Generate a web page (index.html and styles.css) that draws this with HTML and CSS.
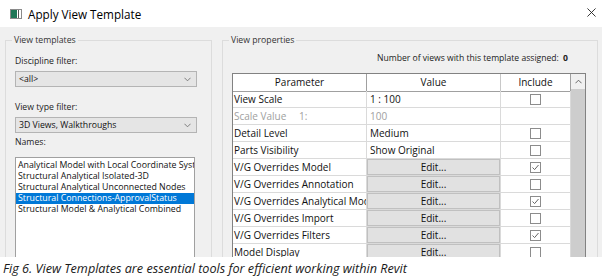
FILE: index.html
```html
<!DOCTYPE html>
<html>
  <head>
    <meta charset='utf-8' />
    <title>Apply View Template</title>
    <link rel="stylesheet" href="styles.css">
  </head>
  <body>
    <div class='dialog'>
      <div class='titlebar'>
        <svg class='app-icon' viewBox='0 0 12 10'>
          <rect x='0.5' y='0.5' width='11' height='9' fill='#fff' stroke='#8a8a8a' />
          <rect x='1' y='1' width='6' height='8' fill='#1f7656' />
          <rect x='8' y='1' width='1' height='8' fill='#555' />
        </svg>
        <span class='title'>Apply View Template</span>
        <svg class='close' viewBox='0 0 10 10'>
          <path d='M0.5 0.5 L9.5 9.5 M9.5 0.5 L0.5 9.5' stroke='#222' stroke-width='1' fill='none' />
        </svg>
      </div>
      <div class='panes'>
        <fieldset class='group templates'>
          <legend>View templates</legend>
          <div class='stack'>
            <div class='label'>Discipline filter:</div>
            <div class='select first'>
              <span>&lt;all&gt;</span>
              <svg class='chev' viewBox='0 0 8 5'><path d='M0.5 0.5 L4 4 L7.5 0.5' stroke='#707070' fill='none' /></svg>
            </div>
            <div class='label gap'>View type filter:</div>
            <div class='select first'>
              <span>3D Views, Walkthroughs</span>
              <svg class='chev' viewBox='0 0 8 5'><path d='M0.5 0.5 L4 4 L7.5 0.5' stroke='#707070' fill='none' /></svg>
            </div>
            <div class='label names-label'>Names:</div>
            <ul class='names'>
              <li>Analytical Model with Local Coordinate System</li>
              <li>Structural Analytical Isolated-3D</li>
              <li>Structural Analytical Unconnected Nodes</li>
              <li class='selected'>Structural Connections-ApprovalStatus</li>
              <li>Structural Model &amp; Analytical Combined</li>
            </ul>
          </div>
        </fieldset>
        <fieldset class='group properties'>
          <legend>View properties</legend>
          <div class='count'>Number of views with this template assigned: <b>0</b></div>
          <div class='gridbox'>
            <div class='grid'>
              <div class='head'>Parameter</div>
              <div class='head'>Value</div>
              <div class='head'>Include</div>

              <div class='cell'>View Scale</div>
              <div class='cell val'>1 : 100</div>
              <div class='cell inc'><span class='check'></span></div>

              <div class='cell dim'>Scale Value <span class='unit'>1:</span></div>
              <div class='cell val dim'>100</div>
              <div class='cell inc'></div>

              <div class='cell'>Detail Level</div>
              <div class='cell val'>Medium</div>
              <div class='cell inc'><span class='check'></span></div>

              <div class='cell'>Parts Visibility</div>
              <div class='cell val'>Show Original</div>
              <div class='cell inc'><span class='check'></span></div>

              <div class='cell'>V/G Overrides Model</div>
              <div class='cell btn'><span class='edit'>Edit...</span></div>
              <div class='cell inc'><span class='check on'><svg viewBox='0 0 9 9'><path d='M1.5 4.5 L3.6 6.6 L7.5 2' /></svg></span></div>

              <div class='cell'>V/G Overrides Annotation</div>
              <div class='cell btn'><span class='edit'>Edit...</span></div>
              <div class='cell inc'><span class='check'></span></div>

              <div class='cell'>V/G Overrides Analytical Model</div>
              <div class='cell btn'><span class='edit'>Edit...</span></div>
              <div class='cell inc'><span class='check on'><svg viewBox='0 0 9 9'><path d='M1.5 4.5 L3.6 6.6 L7.5 2' /></svg></span></div>

              <div class='cell'>V/G Overrides Import</div>
              <div class='cell btn'><span class='edit'>Edit...</span></div>
              <div class='cell inc'><span class='check'></span></div>

              <div class='cell'>V/G Overrides Filters</div>
              <div class='cell btn'><span class='edit'>Edit...</span></div>
              <div class='cell inc'><span class='check on'><svg viewBox='0 0 9 9'><path d='M1.5 4.5 L3.6 6.6 L7.5 2' /></svg></span></div>

              <div class='cell'>Model Display</div>
              <div class='cell btn'><span class='edit'>Edit...</span></div>
              <div class='cell inc'><span class='check'></span></div>
            </div>
            <div class='vscroll'>
              <div class='arrow'>
                <svg viewBox='0 0 8 5'><path d='M0.5 4.5 L4 1 L7.5 4.5' stroke='#555' fill='none' /></svg>
              </div>
              <div class='thumb'></div>
            </div>
          </div>
        </fieldset>
      </div>
    </div>
    <p class='caption'>Fig 6. View Templates are essential tools for efficient working within Revit</p>
  </body>
</html>
```

FILE: styles.css
```css
* {
  box-sizing: border-box;
}
body {
  margin: 0;
  width: 602px;
  height: 280px;
  overflow: hidden;
  background: #fff;
  font-family: "Open Sans", "Noto Sans", sans-serif;
  color: #111;
}
.dialog {
  height: 257px;
  overflow: hidden;
  background: #f0f0f0;
}
.titlebar {
  height: 27px;
  background: #fff;
  display: flex;
  align-items: center;
  padding: 0 6px 0 10px;
}
.app-icon {
  width: 12px;
  height: 10px;
  margin-right: 6px;
}
.title {
  flex: 1;
  font-size: 11.7px;
  color: #000;
}
.close {
  width: 9px;
  height: 9px;
  margin-top: -2px;
}
.panes {
  display: flex;
  gap: 10px;
  padding: 7px 0 0 5px;
}
.group {
  margin: 0;
  min-width: 0;
  height: 260px;
  border: 1px solid #dcdcdc;
}
.group legend {
  font-size: 8.7px;
  line-height: 12px;
  color: #333;
  padding: 0 2px;
  margin-left: -3px;
}
.templates {
  width: 207px;
  padding: 9px 14px 0 9px;
}
.stack {
  display: flex;
  flex-direction: column;
}
.label {
  font-size: 8.7px;
  line-height: 12px;
  color: #222;
}
.select {
  height: 16px;
  margin-top: 4px;
  display: flex;
  align-items: center;
  justify-content: space-between;
  padding: 0 5px 0 3px;
  background: #e5e5e5;
  border: 1px solid #b4b4b4;
  font-size: 8.7px;
}
.chev {
  width: 7px;
  height: 5px;
}
.label.gap {
  margin-top: 14px;
}
.names-label {
  margin-top: 3px;
}
.names {
  list-style: none;
  margin: 9px 2px 0 0;
  padding: 2px 0 0 0;
  height: 120px;
  background: #fff;
  border: 1px solid #a0a0a0;
  font-size: 8.8px;
  line-height: 11px;
}
.names li {
  padding-left: 2px;
  white-space: nowrap;
  overflow: hidden;
}
.names li.selected {
  background: #0078d7;
  color: #fff;
}
.properties {
  width: 376px;
  padding: 6px 11px 0 9px;
}
.count {
  font-size: 8.6px;
  line-height: 12px;
  text-align: right;
  padding-right: 18px;
  color: #222;
}
.count b {
  margin-left: 2px;
}
.gridbox {
  margin-top: 9px;
  width: 354px;
  height: 200px;
  display: flex;
  border: 1px solid #828282;
  background: #fff;
}
.grid {
  display: grid;
  grid-template-columns: 134px 134px 70px;
  grid-auto-rows: 17px;
  align-content: start;
  width: 338px;
  font-size: 10px;
}
.head {
  height: 18px;
  line-height: 17px;
  text-align: center;
  border-right: 1px solid #a0a0a0;
  border-bottom: 1px solid #a0a0a0;
}
.grid .head:nth-child(2) {
  border-right-color: #c8c8c8;
}
.cell {
  height: 17px;
  line-height: 16px;
  padding-left: 1px;
  white-space: nowrap;
  overflow: hidden;
  border-right: 1px solid #dadada;
  border-bottom: 1px solid #dadada;
}
.cell.val {
  padding-left: 3px;
}
.dim {
  color: #a0a0a0;
}
.unit {
  margin-left: 10px;
}
.cell.btn {
  padding: 0;
}
.edit {
  display: block;
  height: 16px;
  line-height: 14px;
  text-align: center;
  background: #e1e1e1;
  border: 1px solid #c0c0c0;
}
.cell.inc {
  display: flex;
  align-items: center;
  justify-content: center;
  padding: 0;
}
.check {
  width: 11px;
  height: 11px;
  border: 1px solid #8c8c8c;
  background: #fff;
  display: flex;
}
.check svg {
  width: 9px;
  height: 9px;
}
.check path {
  stroke: #666;
  stroke-width: 1;
  fill: none;
}
.vscroll {
  width: 14px;
  display: flex;
  flex-direction: column;
  background: #f0f0f0;
}
.arrow {
  height: 15px;
  display: flex;
  align-items: center;
  justify-content: center;
}
.arrow svg {
  width: 7px;
  height: 5px;
}
.thumb {
  flex: 1;
  background: #cdcdcd;
}
.caption {
  margin: 0;
  height: 23px;
  line-height: 23px;
  padding-left: 3px;
  font-style: italic;
  font-size: 12.65px;
  color: #1a1a1a;
}
```
